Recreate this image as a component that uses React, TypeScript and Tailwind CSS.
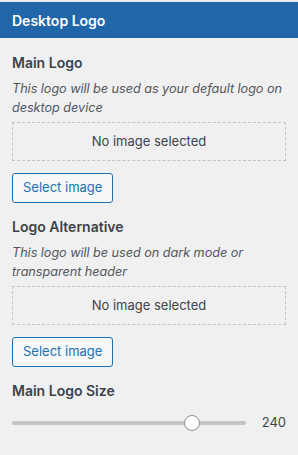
export default function App() {
  return (
    <div
      className="min-h-[455px] w-[298px] border-t-2 border-[#e9eaec] bg-[#f0f0f1] text-[#3c434a]"
      style={{ fontFamily: 'Inter, "Noto Sans", sans-serif' }}
    >
      <div className="flex h-[36px] items-center bg-[#2166a9] px-3 text-[14px] font-semibold text-white">
        Desktop Logo
      </div>

      <div className="px-3 pt-[15px]">
        <ImageField
          title="Main Logo"
          description="This logo will be used as your default logo on desktop device"
        />

        <div className="mt-[14px]">
          <ImageField
            title="Logo Alternative"
            description="This logo will be used on dark mode or transparent header"
          />
        </div>

        <h3 className="mt-[14px] text-[14px] font-semibold leading-[20px] text-[#3c434a]">
          Main Logo Size
        </h3>
        <div className="mt-[14px] flex h-[16px] items-center">
          <div className="relative h-[4px] flex-1 rounded-full bg-[#c3c4c7]">
            <div className="absolute top-1/2 left-[172px] h-[16px] w-[16px] -translate-y-1/2 rounded-full border border-[#8c8f94] bg-white" />
          </div>
          <span className="w-[40px] text-right text-[13px] text-[#3c434a]">240</span>
        </div>
      </div>
    </div>
  );
}

function ImageField({ title, description }: { title: string; description: string }) {
  return (
    <div>
      <h3 className="text-[14px] font-semibold leading-[20px] text-[#3c434a]">{title}</h3>
      <p className="mt-[6px] text-[12.7px] italic leading-[19px] tracking-[-0.05px] text-[#50575e]">
        {description}
      </p>
      <div className="mt-[5px] flex h-[39px] items-center justify-center border border-dashed border-[#c3c4c7] text-[13px] text-[#3c434a]">
        No image selected
      </div>
      <button className="mt-[12px] h-[30px] rounded-[3px] border border-[#2271b1] bg-[#f6f7f7] px-[10px] text-[13px] text-[#2271b1]">
        Select image
      </button>
    </div>
  );
}
